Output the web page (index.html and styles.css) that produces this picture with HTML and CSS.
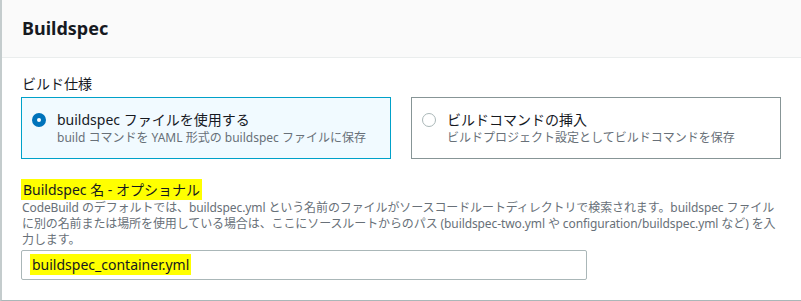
FILE: index.html
```html
<!DOCTYPE html>
<html lang="ja">
<head>
    <meta charset="UTF-8">
    <meta name="viewport" content="width=device-width, initial-scale=1.0">
    <title>Buildspec</title>
    <link rel="stylesheet" href="styles.css">
</head>
<body>
    <div class="panel">
        <div class="panel-header">
            <h2>Buildspec</h2>
        </div>

        <div class="panel-body">
            <div class="field-label">ビルド仕様</div>
            <div class="tiles">
                <label class="tile selected">
                    <span class="radio checked"></span>
                    <span class="tile-text">
                        <span class="tile-title">buildspec ファイルを使用する</span>
                        <span class="tile-desc">build コマンドを YAML 形式の buildspec ファイルに保存</span>
                    </span>
                </label>
                <label class="tile">
                    <span class="radio"></span>
                    <span class="tile-text">
                        <span class="tile-title">ビルドコマンドの挿入</span>
                        <span class="tile-desc">ビルドプロジェクト設定としてビルドコマンドを保存</span>
                    </span>
                </label>
            </div>

            <div class="field">
                <div class="field-label"><mark>Buildspec 名 - オプショナル</mark></div>
                <p class="field-desc">CodeBuild のデフォルトでは、buildspec.yml という名前のファイルがソースコードルートディレクトリで検索されます。buildspec ファイル<br>に別の名前または場所を使用している場合は、ここにソースルートからのパス (buildspec-two.yml や configuration/buildspec.yml など) を入<br>力します。</p>
                <div class="text-input"><mark>buildspec_container.yml</mark></div>
            </div>
        </div>
    </div>
</body>
</html>
```

FILE: styles.css
```css
* {
    box-sizing: border-box;
    margin: 0;
    padding: 0;
}

body {
    font-family: "Noto Sans", "Noto Sans CJK JP", sans-serif;
    color: #16191f;
    background-color: #ffffff;
}

mark {
    background-color: #ffff00;
    color: #16191f;
    padding: 1px 2px;
}

.panel {
    border-left: 2px solid #c4cccd;
    border-bottom: 1px solid #aab7b8;
    height: 301px;
}

.panel-header {
    height: 58px;
    display: flex;
    align-items: center;
    padding-left: 20px;
    background-color: #fafafa;
    border-bottom: 1px solid #eaeded;
}

.panel-header h2 {
    font-size: 18px;
    font-weight: 700;
    line-height: 22px;
    margin-top: -1px;
}

.panel-body {
    padding: 16px 20px 20px 19px;
}

.field-label {
    font-size: 14px;
    line-height: 20px;
    padding-left: 1px;
    margin-bottom: 3px;
}

.tiles {
    display: grid;
    grid-template-columns: 1fr 1fr;
    gap: 20px;
}

.tile {
    display: flex;
    align-items: flex-start;
    height: 62px;
    padding: 12px 10px;
    border: 1px solid #879596;
    background-color: #ffffff;
}

.tile.selected {
    border-color: #00a1c9;
    background-color: #f1faff;
}

.radio {
    flex: none;
    width: 14px;
    height: 14px;
    margin-top: 3px;
    margin-right: 11px;
    border: 1px solid #aab7b8;
    border-radius: 50%;
    background-color: #ffffff;
}

.radio.checked {
    border: 5px solid #0073bb;
}

.tile-text {
    display: flex;
    flex-direction: column;
}

.tile-title {
    font-size: 14px;
    line-height: 20px;
}

.tile-desc {
    font-size: 12px;
    line-height: 16px;
    color: #687078;
}

.field {
    margin-top: 21px;
}

.field .field-label {
    margin-bottom: 0;
    padding-left: 0;
}

.field-desc {
    font-size: 12px;
    line-height: 16px;
    color: #687078;
    padding-left: 1px;
    white-space: nowrap;
    letter-spacing: -0.1px;
}

.text-input {
    width: 566px;
    height: 30px;
    margin-top: 2px;
    padding: 4px 8px;
    border: 1px solid #aab7b8;
    border-radius: 2px;
    font-size: 14px;
    line-height: 20px;
}
```
